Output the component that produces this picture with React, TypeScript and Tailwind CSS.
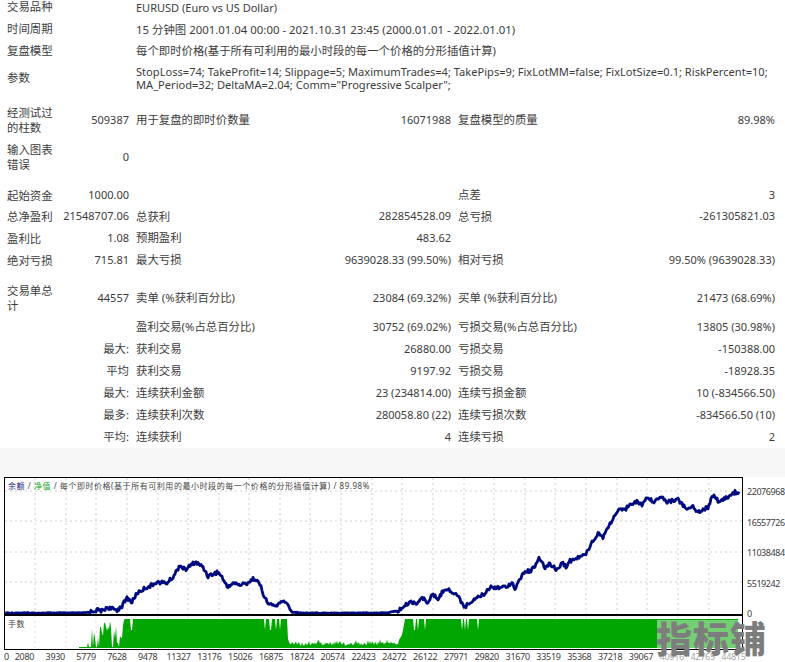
const equityPoints: [number, number][] = [
  [5, 613], [83, 613], [90, 612], [97, 610], [103, 611], [107, 607], [112, 609], [117, 610], [122, 606], [127, 598],
  [132, 602], [137, 593], [147, 587], [153, 585], [155, 582], [167, 583], [173, 577], [180, 565], [185, 570], [195, 562],
  [203, 567], [208, 576], [218, 572], [222, 577], [227, 587], [233, 583], [240, 585], [247, 583], [255, 578], [260, 585],
  [267, 603], [275, 606], [285, 601], [292, 612], [300, 613], [333, 613], [367, 613], [385, 613], [398, 611], [410, 602],
  [417, 603], [422, 598], [427, 602], [433, 595], [438, 599], [445, 588], [457, 595], [465, 607], [475, 598], [483, 595],
  [490, 587], [505, 587], [513, 582], [515, 590], [523, 573], [532, 570], [539, 559], [545, 568], [550, 563], [556, 570],
  [562, 563], [567, 567], [570, 561], [585, 555], [592, 542], [598, 533], [603, 537], [612, 520], [618, 511], [625, 510],
  [630, 503], [637, 502], [642, 505], [647, 497], [653, 502], [660, 496], [667, 502], [678, 499], [687, 510], [693, 506],
  [698, 512], [708, 507], [713, 495], [718, 501], [727, 498], [735, 492], [740, 494],
];

function rand(seed: number) {
  const n = Math.sin(seed * 12.9898) * 43758.5453;
  return n - Math.floor(n);
}

// small fixed wobble so the line looks like a tick curve
function wobble(points: [number, number][]) {
  const out: string[] = [];
  for (let i = 0; i < points.length - 1; i++) {
    const [x1, y1] = points[i];
    const [x2, y2] = points[i + 1];
    const steps = Math.max(1, Math.round(x2 - x1));
    for (let s = 0; s < steps; s++) {
      const t = s / steps;
      const flat = y1 > 610 && y2 > 610;
      const amp = flat ? 0.4 : 2;
      const j = (rand(x1 + s) - 0.5) * 2 * amp;
      out.push(`${(x1 + (x2 - x1) * t - 5).toFixed(1)},${(y1 + (y2 - y1) * t - 478 + j).toFixed(1)}`);
    }
  }
  return out.join(" ");
}

const lotEnvelope: [number, number][] = [
  [79, 31], [86, 28], [90, 20], [92, 12], [96, 20], [100, 10], [103, 5], [107, 3], [110, 3], [112, 20], [114, 8], [116, 10], [118, 22],
  [121, 18], [123, 5], [125, 3], [287, 3], [288, 20], [290, 27], [292, 27], [398, 26], [403, 14], [405, 3], [738, 3],
];
const lotNotches = [131, 132, 265, 270, 271, 276, 280, 414, 415, 418, 425, 462, 465, 468, 478];

function lotsPolygon() {
  const pts: string[] = ["74,32"];
  for (let x = 79; x <= 738; x++) {
    const k = lotEnvelope.findIndex((p, i) => i < lotEnvelope.length - 1 && x >= p[0] && x <= lotEnvelope[i + 1][0]);
    const [x1, y1] = lotEnvelope[k];
    const [x2, y2] = lotEnvelope[k + 1];
    let y = y1 + ((y2 - y1) * (x - x1)) / Math.max(1, x2 - x1);
    if (x < 124) y += rand(x + 0.5) * 20;
    if (x > 287 && x < 403) y += rand(x + 0.5) * 3 - (rand(x) > 0.85 ? 3 : 0);
    if (lotNotches.includes(x)) y = 14;
    pts.push(`${x - 5},${Math.min(y, 31).toFixed(1)}`);
  }
  pts.push("733,32");
  return pts.join(" ");
}

const vGrid = [30, 61, 91, 122, 153, 183, 214, 244, 275, 305, 336, 367, 397, 428, 459, 489, 520, 550, 581, 612, 642, 673, 704];
const hGrid = [13, 43, 74, 104];

const xLabels = ["2080", "3930", "5779", "7628", "9478", "11327", "13176", "15026", "16875", "18724", "20574", "22423", "24272", "26122", "27971", "29820", "31670", "33519", "35368", "37218", "39067"];
const xFaded = ["40916", "42765", "44815"];
const yLabels = ["22076968", "16557726", "11038484", "5519242", "0"];

function Pair({ label, value }: { label?: string; value?: string }) {
  return (
    <div className="flex items-center justify-between pl-[7px] whitespace-nowrap">
      <span className="text-[11.4px]">{label}</span>
      <span>{value}</span>
    </div>
  );
}

// one report row: label, value, then two label/value pairs
function Row({ h, label, value, a, b }: { h: string; label?: string; value?: string; a?: [string, string]; b?: [string, string] }) {
  return (
    <div className={`grid grid-cols-[54px_75px_322px_324px] items-center ${h}`}>
      <div className="pl-[7px] text-[11.4px] leading-[15px]">{label}</div>
      <div className="text-right whitespace-nowrap">{value}</div>
      <Pair label={a?.[0]} value={a?.[1]} />
      <Pair label={b?.[0]} value={b?.[1]} />
    </div>
  );
}

function WideRow({ h, label, children }: { h: string; label: string; children: React.ReactNode }) {
  return (
    <div className={`flex items-center ${h}`}>
      <div className="w-[136px] shrink-0 pl-[7px] text-[11.4px]">{label}</div>
      <div className="whitespace-nowrap leading-[13px]">{children}</div>
    </div>
  );
}

function SideRow({ side, a, b }: { side: string; a: [string, string]; b: [string, string] }) {
  return (
    <div className="grid grid-cols-[129px_322px_324px] items-center h-[22px]">
      <div className="text-right text-[11.4px]">{side}</div>
      <Pair label={a[0]} value={a[1]} />
      <Pair label={b[0]} value={b[1]} />
    </div>
  );
}

export default function App() {
  return (
    <div className="relative w-[785px] h-[662px] overflow-hidden bg-white text-[#3c3c3c] text-[11px] font-['Noto_Sans','Noto_Sans_CJK_SC',sans-serif]">
      <div className="h-[448px] flex flex-col">
        <WideRow h="h-[18px] pb-1" label="交易品种">EURUSD (Euro vs US Dollar)</WideRow>
        <WideRow h="h-[22px]" label="时间周期"><span className="text-[11.4px]">15 分钟图 2001.01.04 00:00 - 2021.10.31 23:45 (2000.01.01 - 2022.01.01)</span></WideRow>
        <WideRow h="h-[21px]" label="复盘模型"><span className="text-[11.4px]">每个即时价格(基于所有可利用的最小时段的每一个价格的分形插值计算)</span></WideRow>
        <WideRow h="h-[34px]" label="参数">
          <span className="text-[11.1px]">
            StopLoss=74; TakeProfit=14; Slippage=5; MaximumTrades=4; TakePips=9; FixLotMM=false; FixLotSize=0.1; RiskPercent=10;
            <br />
            MA_Period=32; DeltaMA=2.04; Comm="Progressive Scalper";
          </span>
        </WideRow>
        <div className="h-[8px]" />
        <Row h="h-[34px]" label="经测试过的柱数" value="509387" a={["用于复盘的即时价数量", "16071988"]} b={["复盘模型的质量", "89.98%"]} />
        <Row h="h-[38px] mt-[1px]" label="输入图表错误" value="0" />
        <div className="h-[8px]" />
        <Row h="h-[22px]" label="起始资金" value="1000.00" b={["点差", "3"]} />
        <Row h="h-[21px]" label="总净盈利" value="21548707.06" a={["总获利", "282854528.09"]} b={["总亏损", "-261305821.03"]} />
        <Row h="h-[22px]" label="盈利比" value="1.08" a={["预期盈利", "483.62"]} />
        <Row h="h-[22px]" label="绝对亏损" value="715.81" a={["最大亏损", "9639028.33 (99.50%)"]} b={["相对亏损", "99.50% (9639028.33)"]} />
        <div className="h-[10px]" />
        <Row h="h-[34px]" label="交易单总计" value="44557" a={["卖单 (%获利百分比)", "23084 (69.32%)"]} b={["买单 (%获利百分比)", "21473 (68.69%)"]} />
        <Row h="h-[22px] mt-[1px]" a={["盈利交易(%占总百分比)", "30752 (69.02%)"]} b={["亏损交易(%占总百分比)", "13805 (30.98%)"]} />
        <SideRow side="最大:" a={["获利交易", "26880.00"]} b={["亏损交易", "-150388.00"]} />
        <SideRow side="平均" a={["获利交易", "9197.92"]} b={["亏损交易", "-18928.35"]} />
        <SideRow side="最大:" a={["连续获利金额", "23 (234814.00)"]} b={["连续亏损金额", "10 (-834566.50)"]} />
        <SideRow side="最多:" a={["连续获利次数", "280058.80 (22)"]} b={["连续亏损次数", "-834566.50 (10)"]} />
        <SideRow side="平均:" a={["连续获利", "4"]} b={["连续亏损", "2"]} />
      </div>

      <div className="h-[29px] bg-[#f7f7f7]" />

      {/* chart */}
      <div className="flex">
        <div className="ml-[4px] w-[739px] shrink-0">
          <div className="relative h-[139px] border border-black border-b-2">
            <svg width="737" height="136" className="block">
              {vGrid.map((x) => (
                <line key={x} x1={x} x2={x} y1={0} y2={136} stroke="#d0d0d0" strokeDasharray="2 3" />
              ))}
              {hGrid.map((y) => (
                <line key={y} x1={0} x2={737} y1={y} y2={y} stroke="#d0d0d0" strokeDasharray="2 3" />
              ))}
              <polyline points={wobble(equityPoints)} fill="none" stroke="#000a80" strokeWidth="2.8" strokeLinejoin="round" />
            </svg>
            <div className="absolute left-[3px] top-[2px] text-[8px] tracking-[0.55px] leading-[12px] text-[#444] whitespace-nowrap">
              <span className="text-[#1c1c8c]">余额</span> / <span className="text-[#16a516]">净值</span> / 每个即时价格(基于所有可利用的最小时段的每一个价格的分形插值计算) / 89.98%
            </div>
          </div>
          <div className="relative h-[34px] border-x border-b border-black">
            <svg width="737" height="33" className="block">
              {vGrid.map((x) => (
                <line key={x} x1={x} x2={x} y1={0} y2={33} stroke="#e2e2e2" strokeDasharray="2 3" />
              ))}
              <polygon points={lotsPolygon()} fill="#02a602" />
            </svg>
            <div className="absolute left-[3px] top-[2px] text-[8px] tracking-[0.5px] leading-[12px] text-[#444]">手数</div>
          </div>
        </div>
        <div className="pl-[4px] h-[144px] pt-[8px] flex flex-col justify-between text-[9px] tracking-[-0.45px] leading-[14px] whitespace-nowrap">
          {yLabels.map((l) => (
            <div key={l}>{l}</div>
          ))}
        </div>
      </div>

      <div className="flex pl-[4px] h-[13px] text-[9px] tracking-[-0.3px] leading-[14px] whitespace-nowrap">
        <div className="w-[5px]">0</div>
        {xLabels.map((l) => (
          <div key={l} className="w-[30.83px] text-center">{l}</div>
        ))}
        {xFaded.map((l) => (
          <div key={l} className="w-[30.83px] text-center text-[#a8a8a8]">{l}</div>
        ))}
      </div>

      {/* watermark */}
      <div className="absolute left-[657px] top-[620px] w-[81px] h-[29px] bg-white/45" />
      <div className="absolute left-[656px] top-[615px] text-[36px] leading-[44px] font-black text-[#7d7d7d] tracking-[1px] whitespace-nowrap font-['Noto_Sans_CJK_SC',sans-serif]">
        指标铺
      </div>
    </div>
  );
}
